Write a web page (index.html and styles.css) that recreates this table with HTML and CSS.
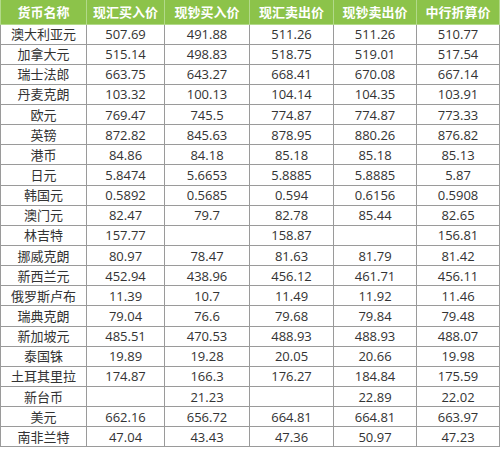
FILE: index.html
```html
<!DOCTYPE html>
<html lang="zh">
<head>
<meta charset="utf-8">
<link rel="stylesheet" href="styles.css">
</head>
<body>
<table class="rates">
<colgroup>
<col class="c1"><col class="c2"><col class="c3"><col class="c4"><col class="c5"><col class="c6">
</colgroup>
<thead>
<tr><th>货币名称</th><th>现汇买入价</th><th>现钞买入价</th><th>现汇卖出价</th><th>现钞卖出价</th><th>中行折算价</th></tr>
</thead>
<tbody>
<tr><td>澳大利亚元</td><td>507.69</td><td>491.88</td><td>511.26</td><td>511.26</td><td>510.77</td></tr>
<tr><td>加拿大元</td><td>515.14</td><td>498.83</td><td>518.75</td><td>519.01</td><td>517.54</td></tr>
<tr><td>瑞士法郎</td><td>663.75</td><td>643.27</td><td>668.41</td><td>670.08</td><td>667.14</td></tr>
<tr><td>丹麦克朗</td><td>103.32</td><td>100.13</td><td>104.14</td><td>104.35</td><td>103.91</td></tr>
<tr><td>欧元</td><td>769.47</td><td>745.5</td><td>774.87</td><td>774.87</td><td>773.33</td></tr>
<tr><td>英镑</td><td>872.82</td><td>845.63</td><td>878.95</td><td>880.26</td><td>876.82</td></tr>
<tr><td>港币</td><td>84.86</td><td>84.18</td><td>85.18</td><td>85.18</td><td>85.13</td></tr>
<tr><td>日元</td><td>5.8474</td><td>5.6653</td><td>5.8885</td><td>5.8885</td><td>5.87</td></tr>
<tr><td>韩国元</td><td>0.5892</td><td>0.5685</td><td>0.594</td><td>0.6156</td><td>0.5908</td></tr>
<tr><td>澳门元</td><td>82.47</td><td>79.7</td><td>82.78</td><td>85.44</td><td>82.65</td></tr>
<tr><td>林吉特</td><td>157.77</td><td></td><td>158.87</td><td></td><td>156.81</td></tr>
<tr><td>挪威克朗</td><td>80.97</td><td>78.47</td><td>81.63</td><td>81.79</td><td>81.42</td></tr>
<tr><td>新西兰元</td><td>452.94</td><td>438.96</td><td>456.12</td><td>461.71</td><td>456.11</td></tr>
<tr><td>俄罗斯卢布</td><td>11.39</td><td>10.7</td><td>11.49</td><td>11.92</td><td>11.46</td></tr>
<tr><td>瑞典克朗</td><td>79.04</td><td>76.6</td><td>79.68</td><td>79.84</td><td>79.48</td></tr>
<tr><td>新加坡元</td><td>485.51</td><td>470.53</td><td>488.93</td><td>488.93</td><td>488.07</td></tr>
<tr><td>泰国铢</td><td>19.89</td><td>19.28</td><td>20.05</td><td>20.66</td><td>19.98</td></tr>
<tr><td>土耳其里拉</td><td>174.87</td><td>166.3</td><td>176.27</td><td>184.84</td><td>175.59</td></tr>
<tr><td>新台币</td><td></td><td>21.23</td><td></td><td>22.89</td><td>22.02</td></tr>
<tr><td>美元</td><td>662.16</td><td>656.72</td><td>664.81</td><td>664.81</td><td>663.97</td></tr>
<tr><td>南非兰特</td><td>47.04</td><td>43.43</td><td>47.36</td><td>50.97</td><td>47.23</td></tr>
</tbody>
</table>
</body>
</html>
```
FILE: styles.css
```css
html, body {
  margin: 0;
  padding: 0;
  background: #ffffff;
}
.rates {
  border-collapse: collapse;
  table-layout: fixed;
  width: 499px;
  font-family: "Open Sans", "Noto Sans CJK SC", sans-serif;
  font-size: 13px;
  color: #333333;
}
.c1 { width: 86px; }
.c2 { width: 78px; }
.c3 { width: 85px; }
.c4 { width: 84px; }
.c5 { width: 83px; }
.c6 { width: 83px; }
.rates thead tr {
  height: 24px;
}
.rates tbody tr {
  height: 20.15px;
}
.rates th {
  background: #8cc34a;
  color: #ffffff;
  font-weight: bold;
  padding: 0;
  border: 1px solid #b2d98a;
  border-top: none;
  text-align: center;
  line-height: 20px;
}
.rates td {
  padding: 0;
  border: 1px solid #9a9a9a;
  text-align: center;
  line-height: 18px;
  white-space: nowrap;
}
```
